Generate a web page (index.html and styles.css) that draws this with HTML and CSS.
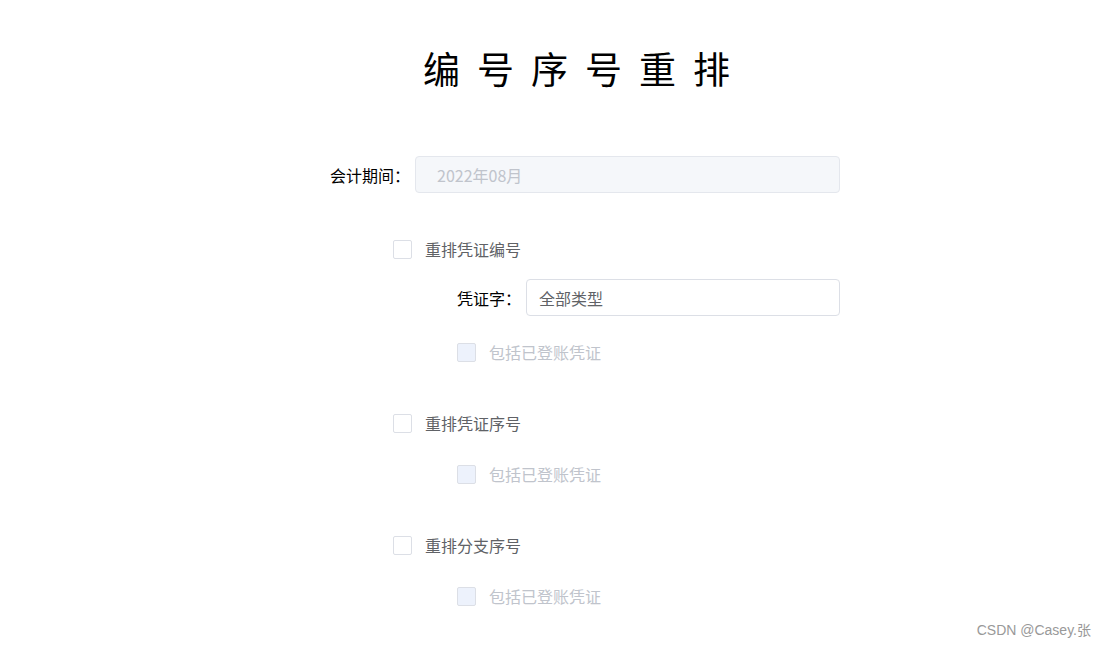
FILE: index.html
```html
<!DOCTYPE html>
<html lang="zh-CN">
<head>
<meta charset="utf-8">
<title>编号序号重排</title>
<link rel="stylesheet" href="styles.css">
</head>
<body>
<div class="page">
  <div class="panel">
    <h1 class="title">编号序号重排</h1>
    <div class="form">
      <div class="field">
        <span class="label">会计期间：</span>
        <div class="input disabled">2022年08月</div>
      </div>

      <div class="check-row top first">
        <span class="box"></span><span class="check-text">重排凭证编号</span>
      </div>
      <div class="field sub">
        <span class="label">凭证字：</span>
        <div class="input select">全部类型</div>
      </div>
      <div class="check-row sub small-gap">
        <span class="box off"></span><span class="check-text off">包括已登账凭证</span>
      </div>

      <div class="check-row top">
        <span class="box"></span><span class="check-text">重排凭证序号</span>
      </div>
      <div class="check-row sub inner">
        <span class="box off"></span><span class="check-text off">包括已登账凭证</span>
      </div>

      <div class="check-row top">
        <span class="box"></span><span class="check-text">重排分支序号</span>
      </div>
      <div class="check-row sub inner">
        <span class="box off"></span><span class="check-text off">包括已登账凭证</span>
      </div>
    </div>
  </div>
  <div class="watermark">CSDN @Casey.张</div>
</div>
</body>
</html>
```

FILE: styles.css
```css
* { box-sizing: border-box; }
html, body {
  margin: 0;
  padding: 0;
  background: #ffffff;
}
body {
  font-family: "Noto Sans CJK SC", "Microsoft YaHei", "Liberation Sans", sans-serif;
  font-size: 16px;
  color: #000;
}
.page {
  position: relative;
  width: 1106px;
  height: 647px;
  overflow: hidden;
}
.panel {
  width: 510px;
  margin-left: 330px;
  padding-top: 43px;
}
.title {
  margin: 0;
  height: 50px;
  line-height: 50px;
  font-size: 37px;
  font-weight: normal;
  text-align: center;
  letter-spacing: 17px;
  color: #000;
}
.form {
  margin-top: 63px;
}
.field {
  display: flex;
  align-items: center;
  gap: 5px;
  height: 37px;
}
.field.sub {
  padding-left: 127px;
  margin-top: 18px;
}
.label {
  font-size: 16px;
  line-height: 24px;
  white-space: nowrap;
  color: #000;
}
.input {
  flex: 1;
  height: 37px;
  border: 1px solid #dcdfe6;
  border-radius: 4px;
  padding-left: 12px;
  display: flex;
  align-items: center;
  font-size: 16px;
  color: #606266;
  background: #fff;
}
.input.disabled {
  background: #f5f7fa;
  border-color: #e4e7ed;
  color: #c0c4cc;
  padding-left: 21px;
}
.check-row {
  display: flex;
  align-items: center;
  height: 24px;
  gap: 13px;
}
.check-row.top {
  padding-left: 63px;
  margin-top: 47px;
}
.check-row.top.first {
  margin-top: 44px;
}
.check-row.sub {
  padding-left: 127px;
}
.check-row.small-gap {
  margin-top: 24px;
}
.check-row.inner {
  margin-top: 27px;
}
.box {
  width: 19px;
  height: 19px;
  border: 1px solid #dcdfe6;
  border-radius: 2px;
  background: #fff;
  flex: none;
}
.box.off {
  background: #edf2fc;
  border-color: #dcdfe6;
}
.check-text {
  font-size: 16px;
  color: #606266;
  line-height: 24px;
}
.check-text.off {
  color: #c0c4cc;
}
.watermark {
  position: absolute;
  right: 15px;
  top: 620px;
  font-family: "Liberation Sans", "Noto Sans CJK SC", sans-serif;
  font-size: 14px;
  line-height: 20px;
  color: #999999;
}
```
